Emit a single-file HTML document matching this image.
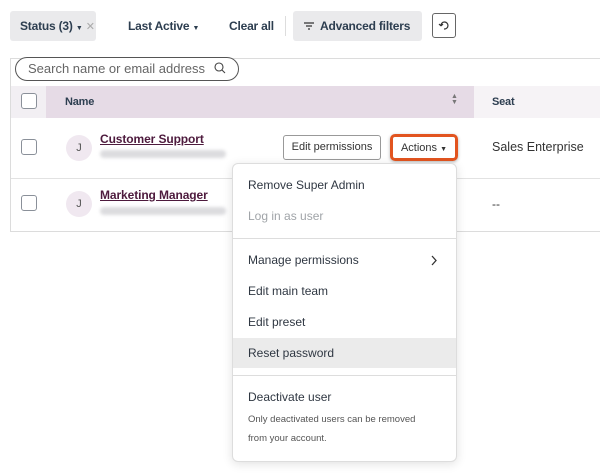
<!DOCTYPE html>
<html><head><style>
*{margin:0;padding:0;box-sizing:border-box}
body{width:600px;height:475px;background:#fff;font-family:"Liberation Sans",sans-serif;color:#33475b;position:relative;overflow:hidden}
.a{position:absolute}
.chip{background:#eaeaec;border-radius:3px}
.b{font-weight:bold;font-size:12px;color:#2d3e50;letter-spacing:-0.2px;white-space:nowrap}
.cb{position:absolute;width:16px;height:16px;border:1.3px solid #8a9099;border-radius:3px;background:#fff}
.av{position:absolute;width:26px;height:26px;border-radius:50%;background:#f0e8f0;color:#555;font-size:11px;text-align:center;line-height:26px}
.nm{position:absolute;font-weight:bold;font-size:12px;color:#4d1a3d;text-decoration:underline;letter-spacing:-0.1px}
.bl{position:absolute;height:8px;background:#dcdcdf;border-radius:4px;filter:blur(1.5px)}
.it{position:absolute;left:248px;font-size:12px;color:#2f3742}
</style></head><body>
<div class="a chip" style="left:10px;top:11px;width:86px;height:30px"></div>
<div class="a b" style="left:20px;top:19px">Status (3) <span style="font-size:7px">▼</span> <span style="font-weight:normal;color:#aaa;font-size:11px">✕</span></div>
<div class="a b" style="left:128px;top:19px">Last Active <span style="font-size:7px">▼</span></div>
<div class="a b" style="left:229px;top:19px">Clear all</div>
<div class="a" style="left:285px;top:16px;width:1px;height:20px;background:#ddd"></div>
<div class="a chip" style="left:293px;top:11px;width:129px;height:30px"></div>
<div class="a b" style="left:320px;top:19px">Advanced filters</div>
<svg class="a" style="left:303px;top:21px" width="12" height="10"><path d="M1 2h10M3 5h6M5 8h2" stroke="#333" stroke-width="1.2"/></svg>
<div class="a" style="left:432px;top:13px;width:24px;height:25px;border:1px solid #666;border-radius:3px"></div>
<svg class="a" style="left:438px;top:19px" width="12" height="12"><path d="M3 7A3.5 3.5 0 1 1 6 10M3 7L1 5M3 7L5 5" stroke="#333" fill="none" stroke-width="1.2"/></svg>

<div class="a" style="left:10px;top:58px;width:590px;height:1px;background:#dcdcdc"></div>
<div class="a" style="left:10px;top:58px;width:1px;height:174px;background:#dcdcdc"></div>
<div class="a" style="left:10px;top:231px;width:590px;height:1px;background:#dcdcdc"></div>
<div class="a" style="left:15px;top:57px;width:224px;height:24px;border:1px solid #555;border-radius:12px;background:#fff"></div>
<div class="a" style="left:28px;top:61px;font-size:13px;color:#666">Search name or email address</div>
<svg class="a" style="left:214px;top:62px" width="12" height="13"><circle cx="5" cy="5" r="4" stroke="#444" fill="none" stroke-width="1.1"/><path d="M8 8l3 3" stroke="#444" stroke-width="1.1"/></svg>

<div class="a" style="left:11px;top:86px;width:35px;height:32px;background:#f2eff3"></div>
<div class="a" style="left:46px;top:86px;width:428px;height:32px;background:#e6dbe6"></div>
<div class="a" style="left:474px;top:86px;width:126px;height:32px;background:#f6f3f6"></div>
<div class="cb" style="left:21px;top:93px"></div>
<div class="a b" style="left:65px;top:96px;font-size:11px">Name</div>
<div class="a" style="left:451px;top:94px;font-size:7px;line-height:6px;color:#777">▲<br>▼</div>
<div class="a b" style="left:492px;top:96px;font-size:11px">Seat</div>
<div class="a" style="left:11px;top:178px;width:589px;height:1px;background:#e2e2e2"></div>

<div class="cb" style="left:21px;top:139px"></div>
<div class="av" style="left:66px;top:135px">J</div>
<div class="nm" style="left:100px;top:132px">Customer Support</div>
<div class="bl" style="left:100px;top:150px;width:126px"></div>
<div class="a" style="left:283px;top:135px;width:98px;height:25px;border:1px solid #999;border-radius:3px;font-size:11px;text-align:center;line-height:23px;color:#333">Edit permissions</div>
<div class="a" style="left:390px;top:134px;width:68px;height:27px;border:3px solid #e2541f;border-radius:5px;font-size:11px;text-align:center;line-height:22px;color:#333;box-shadow:0 1px 3px rgba(0,0,0,.3)">Actions <span style="font-size:7px">▼</span></div>
<div class="a" style="left:492px;top:140px;font-size:12.5px;color:#333">Sales Enterprise</div>

<div class="cb" style="left:21px;top:195px"></div>
<div class="av" style="left:66px;top:191px">J</div>
<div class="nm" style="left:100px;top:188px">Marketing Manager</div>
<div class="bl" style="left:100px;top:207px;width:126px"></div>
<div class="a" style="left:492px;top:197px;font-size:12px;color:#333">--</div>

<div class="a" style="left:232px;top:163px;width:225px;height:299px;background:#fff;border:1px solid #ddd;border-radius:6px;box-shadow:0 2px 10px rgba(0,0,0,.12)"></div>
<div class="it" style="top:178px">Remove Super Admin</div>
<div class="it" style="top:209px;color:#a0a4a8">Log in as user</div>
<div class="a" style="left:233px;top:238px;width:223px;height:1px;background:#ddd"></div>
<div class="it" style="top:253px">Manage permissions</div>
<svg class="a" style="left:430px;top:255px" width="8" height="11"><path d="M2 1l4 4.5L2 10" stroke="#333" fill="none" stroke-width="1.3"/></svg>
<div class="it" style="top:284px">Edit main team</div>
<div class="it" style="top:315px">Edit preset</div>
<div class="a" style="left:233px;top:338px;width:223px;height:30px;background:#ebebeb"></div>
<div class="it" style="top:346px">Reset password</div>
<div class="a" style="left:233px;top:375px;width:223px;height:1px;background:#ddd"></div>
<div class="it" style="top:390px">Deactivate user</div>
<div class="it" style="top:414px;font-size:9.5px;color:#555">Only deactivated users can be removed</div>
<div class="it" style="top:433px;font-size:9.5px;color:#555">from your account.</div>
</body></html>
